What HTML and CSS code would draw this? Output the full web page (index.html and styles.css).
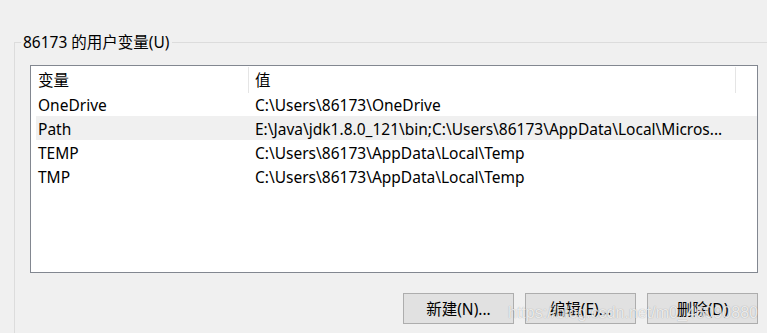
FILE: index.html
```html
<!DOCTYPE html>
<html lang="zh-CN">
<head>
  <meta charset="UTF-8">
  <meta name="viewport" content="width=device-width, initial-scale=1.0">
  <title>环境变量</title>
  <link rel="stylesheet" href="styles.css">
</head>
<body>
  <fieldset class="group">
    <legend>86173 的用户变量(U)</legend>

    <div class="var-list">
      <div class="var-head">
        <div class="cell-name">变量</div>
        <div class="cell-value">值</div>
      </div>
      <div class="var-row">
        <div class="cell-name">OneDrive</div>
        <div class="cell-value">C:\Users\86173\OneDrive</div>
      </div>
      <div class="var-row hover">
        <div class="cell-name">Path</div>
        <div class="cell-value">E:\Java\jdk1.8.0_121\bin;C:\Users\86173\AppData\Local\Micros...</div>
      </div>
      <div class="var-row">
        <div class="cell-name">TEMP</div>
        <div class="cell-value">C:\Users\86173\AppData\Local\Temp</div>
      </div>
      <div class="var-row">
        <div class="cell-name">TMP</div>
        <div class="cell-value">C:\Users\86173\AppData\Local\Temp</div>
      </div>
    </div>

    <div class="actions">
      <button>新建(N)...</button>
      <button>编辑(E)...</button>
      <button>删除(D)</button>
      <!-- watermark from the original screenshot -->
      <span class="watermark">https://blog.csdn.net/m0_46090880</span>
    </div>
  </fieldset>
</body>
</html>
```

FILE: styles.css
```css
body {
  margin: 0;
  background: #f0f0f0;
  font-family: "Noto Sans", "Noto Sans CJK SC", sans-serif;
  font-size: 15.5px;
  color: #000;
  overflow: hidden;
}

.group {
  box-sizing: border-box;
  height: 301px;
  margin: 32px 0 0 14px;
  padding: 13px 9px 0 15px;
  border: none;
  border-top: 1px solid #dcdcdc;
  border-left: 1px solid #dcdcdc;
  min-inline-size: 0;
}

.group legend {
  margin-left: -9px;
  padding: 0 2px;
  line-height: 20px;
}

.var-list {
  box-sizing: border-box;
  height: 208px;
  background: #fff;
  border: 1px solid #828790;
  padding: 0 0 0 5px;
}

.var-head,
.var-row {
  display: grid;
  grid-template-columns: 213px 487px;
  white-space: nowrap;
}

.var-head {
  height: 26px;
  line-height: 26px;
}

.var-head > div {
  border-right: 1px solid #e5e5e5;
  margin-top: 1px;
}

.var-row {
  height: 24px;
  line-height: 26px;
}

.var-row.hover {
  background: #f0f0f0;
}

.cell-name {
  padding-left: 2px;
}

.cell-value {
  padding-left: 6px;
  overflow: hidden;
}

.actions {
  position: relative;
  display: flex;
  justify-content: flex-end;
  gap: 11px;
  margin-top: 20px;
}

.actions button {
  width: 111px;
  height: 31px;
  padding: 0;
  background: #e1e1e1;
  border: 1px solid #adadad;
  border-radius: 0;
  font: inherit;
  color: #000;
}

.watermark {
  position: absolute;
  left: 478px;
  top: 10px;
  font-family: "Liberation Sans", sans-serif;
  font-size: 16px;
  line-height: 20px;
  color: rgba(255, 255, 255, 0.8);
  text-shadow: 0 0 1px rgba(0, 0, 0, 0.35);
  pointer-events: none;
}
```
